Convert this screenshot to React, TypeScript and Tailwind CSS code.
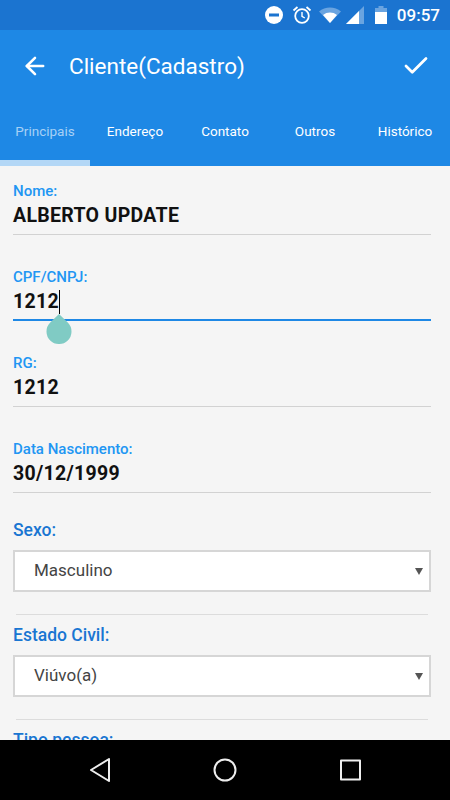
import { ArrowLeft, Check } from 'lucide-react'

const tabs = ['Principais', 'Endereço', 'Contato', 'Outros', 'Histórico']

function StatusBar() {
  return (
    <div className="h-[30px] shrink-0 bg-[#1b74d0] flex items-center justify-end pr-[10px] text-white">
      {/* do not disturb */}
      <svg width="18" height="18" viewBox="0 0 18 18" className="mr-[9px]">
        <circle cx="9" cy="9" r="9" fill="#fff" />
        <rect x="4" y="7.5" width="10" height="3" fill="#1b74d0" />
      </svg>
      {/* alarm */}
      <svg width="20" height="20" viewBox="0 0 20 20" fill="none" stroke="#fff" className="mr-[7px]">
        <circle cx="10" cy="11" r="6.8" strokeWidth="1.8" />
        <path d="M10 7v4.3l2.8 1.7" strokeWidth="1.4" />
        <path d="M1.5 5.5 5.5 2M18.5 5.5 14.5 2" strokeWidth="1.8" />
      </svg>
      {/* wifi */}
      <svg width="22" height="16" viewBox="0 0 22 16" className="mr-[5px]">
        <path d="M0 4.5C6-1 16-1 22 4.5L11 16Z" fill="#fff" fillOpacity="0.35" />
        <path d="M4 8C8 4.700 14 4.700 18 8L11 16Z" fill="#fff" />
      </svg>
      {/* signal */}
      <svg width="18" height="18" viewBox="0 0 18 18" className="mr-[11px]">
        <path d="M0 18 18 0V18Z" fill="#fff" fillOpacity="0.35" />
        <path d="M0 18 13 5V18Z" fill="#fff" />
      </svg>
      {/* battery */}
      <svg width="12" height="18" viewBox="0 0 12 18" className="mr-[10px]">
        <path d="M0 2h3.500V0h5v2H12v16H0Z" fill="#fff" fillOpacity="0.35" />
        <path d="M0 6h12v12H0Z" fill="#fff" />
      </svg>
      <span className="text-[17px] font-medium leading-none">09:57</span>
    </div>
  )
}

function Header() {
  return (
    <div className="h-[136px] shrink-0 bg-[#1e88e5] text-white">
      <div className="h-[72px] flex items-center pl-[21px] pr-[19px]">
        <ArrowLeft size={28} strokeWidth={2.2} />
        <span className="ml-[20px] text-[22.500px] leading-none flex-1 pt-px">Cliente(Cadastro)</span>
        <Check size={30} strokeWidth={2.2} />
      </div>
      <div className="flex h-[64px]">
        {tabs.map((tab, i) => (
          <div key={tab} className="w-[90px] flex flex-col">
            <div className={`flex-1 flex items-start justify-center pt-[19px] text-[13.500px] leading-[20px] ${i === 0 ? 'text-[#a6d0f5]' : 'text-white'}`}>
              {tab}
            </div>
            <div className={i === 0 ? 'h-[6px] bg-[#b3d7f6]' : 'h-[6px]'} />
          </div>
        ))}
      </div>
    </div>
  )
}

function Field({ label, value, focused }: { label: string; value: string; focused?: boolean }) {
  return (
    <div className="relative">
      <div className="h-[21px] text-[15px] font-medium leading-[18px] text-[#2196f3]">{label}</div>
      <div className="h-[25px] text-[19.500px] font-bold leading-[26px] tracking-[0.3px] text-[#111]">
        {value}
      </div>
      {focused && <span className="absolute top-[22px] left-[46px] h-[24px] w-px bg-black" />}
      <div className={focused ? 'mt-[5px] h-[2px] bg-[#1e88e5]' : 'mt-[6px] h-px bg-[#d2d2d2]'} />
      {focused && (
        <svg width="26" height="30" viewBox="0 0 26 30" className="absolute left-[33px] top-[46px]">
          <path d="M13 0 L22 8.830 A12.500 12.500 0 1 1 4 8.830 Z" fill="#80cbc4" />
        </svg>
      )}
    </div>
  )
}

function SelectField({ label, value }: { label: string; value: string }) {
  return (
    <div className="h-[105px]">
      <div className="h-[20px] text-[17.500px] font-medium leading-[20px] text-[#1976d2]">{label}</div>
      <div className="mt-[10px] h-[42px] bg-white border-2 border-[#d6d6d6] flex items-center pl-[19px] pr-[6px] text-[17px] text-[#444]">
        <span className="flex-1">{value}</span>
        <svg width="8" height="8" viewBox="0 0 8 8">
          <path d="M0 1h8L4 8Z" fill="#555" />
        </svg>
      </div>
      <div className="mt-[22px] mx-[3px] h-px bg-[#dcdcdc]" />
    </div>
  )
}

function NavBar() {
  return (
    <div className="h-[60px] shrink-0 bg-black flex items-center justify-center gap-[101px] relative z-10">
      <svg width="24" height="26" viewBox="0 0 24 26" fill="none" stroke="#eee" strokeWidth="2" strokeLinejoin="round">
        <path d="M21 2 3 13l18 11Z" />
      </svg>
      <svg width="24" height="26" viewBox="0 0 24 26" fill="none" stroke="#eee" strokeWidth="2">
        <circle cx="12" cy="13" r="10.500" />
      </svg>
      <svg width="24" height="26" viewBox="0 0 24 26" fill="none" stroke="#eee" strokeWidth="2" strokeLinejoin="round">
        <rect x="3" y="3.500" width="19" height="19" />
      </svg>
    </div>
  )
}

export default function App() {
  return (
    <div className="h-[800px] w-[450px] flex flex-col overflow-hidden bg-[#f5f5f5] font-['Roboto',sans-serif]">
      <StatusBar />
      <Header />
      <div className="flex-1 overflow-hidden pl-[13px] pr-[19px] pt-[16px]">
        <div className="flex flex-col gap-[33px]">
          <Field label="Nome:" value="ALBERTO UPDATE" />
          <Field label="CPF/CNPJ:" value="1212" focused />
          <Field label="RG:" value="1212" />
          <Field label="Data Nascimento:" value="30/12/1999" />
        </div>
        <div className="mt-[27px]">
          <SelectField label="Sexo:" value="Masculino" />
          <SelectField label="Estado Civil:" value="Viúvo(a)" />
          <div className="text-[17.500px] font-medium leading-[20px] text-[#1976d2]">Tipo pessoa:</div>
        </div>
      </div>
      <NavBar />
    </div>
  )
}
